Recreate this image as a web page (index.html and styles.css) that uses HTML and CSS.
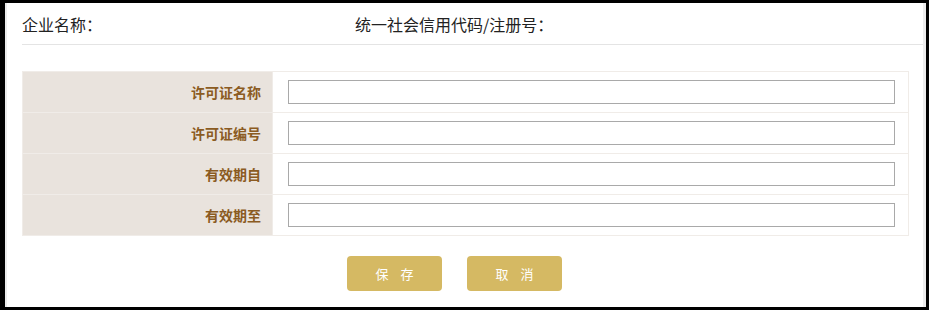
FILE: index.html
```html
<!DOCTYPE html>
<html lang="zh-CN">
<head>
<meta charset="utf-8">
<title>许可证信息</title>
<link rel="stylesheet" href="styles.css">
</head>
<body>
<div class="frame">
  <div class="header">
    <span class="company">企业名称：</span>
    <span class="code">统一社会信用代码/注册号：</span>
  </div>
  <table class="form">
    <tr>
      <td class="label">许可证名称</td>
      <td class="field"><input class="text" type="text"></td>
    </tr>
    <tr>
      <td class="label">许可证编号</td>
      <td class="field"><input class="text" type="text"></td>
    </tr>
    <tr>
      <td class="label">有效期自</td>
      <td class="field"><input class="text" type="text"></td>
    </tr>
    <tr>
      <td class="label">有效期至</td>
      <td class="field"><input class="text" type="text"></td>
    </tr>
  </table>
  <div class="actions">
    <button class="btn" type="button">保存</button>
    <button class="btn" type="button">取消</button>
  </div>
</div>
</body>
</html>
```

FILE: styles.css
```css
html, body {
  margin: 0;
  padding: 0;
  background: #000;
}
body {
  width: 929px;
  height: 310px;
  padding: 3px 3px 3px 5px;
  box-sizing: border-box;
  font-family: "Noto Sans CJK SC", "Noto Sans", sans-serif;
}
.frame {
  background: #fff;
  height: 304px;
  box-sizing: border-box;
  border-left: 2px solid #ececec;
  border-right: 3px solid #ececec;
  overflow: hidden;
}
.header {
  margin-left: 15px;
  height: 42px;
  border-bottom: 1px solid #e4e4e4;
  display: flex;
  align-items: center;
  font-size: 16px;
  color: #222;
  padding-top: 1px;
  box-sizing: border-box;
}
.company {
  width: 333px;
}
.form {
  margin: 26px 0 0 15px;
  border-collapse: collapse;
  width: 887px;
}
.form td {
  border: 1px solid #f0ece8;
  height: 41px;
  padding: 0;
  box-sizing: border-box;
}
.label {
  width: 250px;
  background: #e9e3dd;
  text-align: right;
  padding-right: 11px !important;
  font-size: 14px;
  font-weight: bold;
  color: #8b5b22;
}
.field {
  padding: 0 12px 0 15px !important;
  background: #fff;
}
.text {
  display: block;
  width: 607px;
  height: 24px;
  box-sizing: border-box;
  border: 1px solid #a9a9a9;
  margin: 0;
  padding: 0 4px;
  background: #fff;
  margin-top: -1px;
}
.actions {
  display: flex;
  gap: 25px;
  margin: 20px 0 0 340px;
}
.btn {
  width: 95px;
  height: 35px;
  border: none;
  border-radius: 4px;
  background: #d5b963;
  color: #fff;
  font-family: "Noto Sans CJK SC", "Noto Sans", sans-serif;
  font-size: 13px;
  letter-spacing: 12px;
  padding: 0 0 0 12px;
}
```
